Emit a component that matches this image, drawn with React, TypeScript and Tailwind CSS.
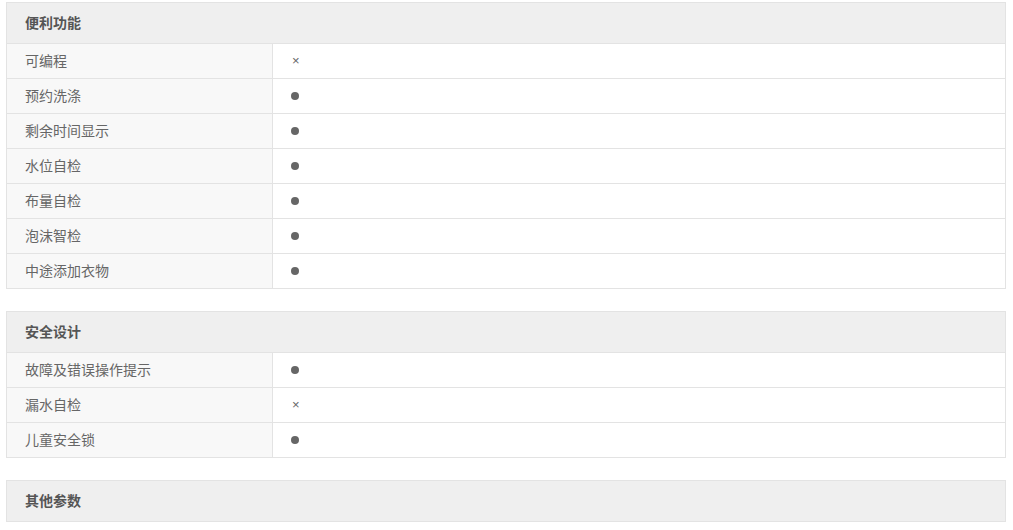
type Row = { label: string; value: 'yes' | 'no' };

interface Section {
  title: string;
  rows: Row[];
}

const sections: Section[] = [
  {
    title: '便利功能',
    rows: [
      { label: '可编程', value: 'no' },
      { label: '预约洗涤', value: 'yes' },
      { label: '剩余时间显示', value: 'yes' },
      { label: '水位自检', value: 'yes' },
      { label: '布量自检', value: 'yes' },
      { label: '泡沫智检', value: 'yes' },
      { label: '中途添加衣物', value: 'yes' },
    ],
  },
  {
    title: '安全设计',
    rows: [
      { label: '故障及错误操作提示', value: 'yes' },
      { label: '漏水自检', value: 'no' },
      { label: '儿童安全锁', value: 'yes' },
    ],
  },
  { title: '其他参数', rows: [] },
];

function SpecTable({ section }: { section: Section }) {
  return (
    <div className="border border-[#e3e3e3] mb-[22px]">
      {/* header */}
      <div className="h-[40px] bg-[#efefef] flex items-center pl-[18px] pb-[2px] text-[14px] font-bold text-[#555]">
        {section.title}
      </div>
      {section.rows.map((row) => (
        <div key={row.label} className="flex h-[35px] border-t border-[#e3e3e3]">
          <div className="w-[266px] shrink-0 bg-[#f8f8f8] border-r border-[#e3e3e3] flex items-center pl-[18px] pb-[2px] text-[14px] text-[#666]">
            {row.label}
          </div>
          <div className="flex-1 bg-white flex items-center pl-[18px] text-[#666]">
            {row.value === 'yes' ? (
              <span className="block w-[8px] h-[8px] rounded-full bg-[#666]" />
            ) : (
              <span className="text-[13px] leading-none ml-[1px] mb-[1px] font-['Liberation_Sans'] text-[#666]">×</span>
            )}
          </div>
        </div>
      ))}
    </div>
  );
}

export default function App() {
  return (
    <div
      className="bg-white min-h-[530px] pt-[2px] pl-[6px] pr-[7px]"
      style={{ fontFamily: '"Noto Sans CJK SC", "Liberation Sans", sans-serif' }}
    >
      {sections.map((s) => (
        <SpecTable key={s.title} section={s} />
      ))}
    </div>
  );
}
